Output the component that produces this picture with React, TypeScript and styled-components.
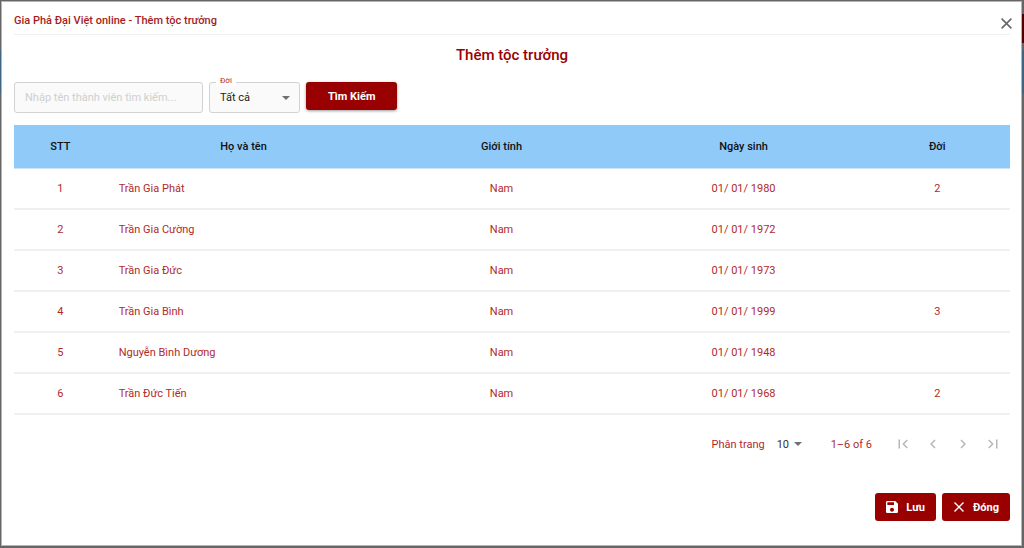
import React from "react";
import styled, { createGlobalStyle } from "styled-components";

const colors = {
  brand: "#990000",
  text: "#b22a2a",
  head: "#90caf9",
  line: "#f0f0f0",
  ink: "#212121",
};

const GlobalStyle = createGlobalStyle`
  *, *::before, *::after { box-sizing: border-box; }
  body { margin: 0; background: #666; }
  body, button, input, select {
    font-family: Roboto, "Noto Sans", sans-serif;
    font-size: 11px;
  }
`;

const Backdrop = styled.div`
  display: flex;
  min-height: 100vh;
  padding: 1px 2px 2px 1px;
  background:
    linear-gradient(#500000, #500000) right 14px / 3px 29px no-repeat,
    linear-gradient(#3f6583, #3f6583) left 50px / 100% 44px no-repeat,
    #666;
`;

const Dialog = styled.section`
  flex: 1;
  display: flex;
  flex-direction: column;
  min-width: 0;
  padding: 0 11px 24px 12px;
  background: #fff;
  border: 1px solid #b4b4b4;
`;

const TitleBar = styled.header`
  display: flex;
  align-items: center;
  justify-content: space-between;
  height: 33px;
  border-bottom: 1px solid #f0f0f0;
`;

const DialogTitle = styled.h1`
  margin: 0;
  padding-top: 6px;
  font-size: 11px;
  font-weight: 500;
  line-height: 16px;
  color: #a51d1d;
`;

const CloseButton = styled.button`
  display: flex;
  margin: 10px -5px 0 0;
  padding: 2px;
  border: 0;
  background: none;
  color: #666;
  cursor: pointer;
`;

const Heading = styled.h2`
  margin: 8px 0 0;
  font-size: 15px;
  font-weight: 500;
  line-height: 24px;
  text-align: center;
  color: ${colors.brand};
`;

const SearchForm = styled.form`
  display: flex;
  align-items: flex-start;
  gap: 6px;
  margin-top: 15px;
`;

const fieldBox = `
  height: 31px;
  border: 1px solid #d2d2d2;
  border-radius: 3px;
  background: #fafafa;
  padding: 0 10px;
  color: ${colors.ink};
`;

const SearchInput = styled.input`
  ${fieldBox}
  width: 189px;
  &::placeholder { color: #cfcfcf; opacity: 1; }
`;

const Field = styled.div`
  position: relative;
  display: flex;
  align-items: center;
`;

const FieldLabel = styled.label`
  position: absolute;
  top: -6px;
  left: 7px;
  padding: 0 4px;
  font-size: 8px;
  line-height: 10px;
  color: ${colors.text};
  background: #fff;
`;

const GenerationSelect = styled.select`
  ${fieldBox}
  width: 91px;
  appearance: none;
`;

const Arrow = styled.svg<{ $right: number }>`
  position: absolute;
  right: ${(p) => p.$right}px;
  pointer-events: none;
  fill: #707070;
`;

const ActionButton = styled.button<{ $wide?: boolean }>`
  display: inline-flex;
  align-items: center;
  justify-content: center;
  gap: 8px;
  height: 28px;
  padding: 0 ${(p) => (p.$wide ? 22 : 11)}px;
  border: 0;
  border-radius: 3px;
  background: ${colors.brand};
  color: #fff;
  font-weight: 700;
  cursor: pointer;
  box-shadow: ${(p) => (p.$wide ? "0 1px 3px rgba(0, 0, 0, 0.4)" : "none")};
`;

const Table = styled.table`
  width: 100%;
  margin-top: 12px;
  table-layout: fixed;
  border-collapse: separate;
  border-spacing: 0;
`;

const Col = styled.col<{ $share: number }>`
  width: ${(p) => p.$share}%;
`;

const HeadCell = styled.th`
  height: 44px;
  padding: 0 12px;
  background: ${colors.head};
  border-bottom: 1px solid #cfe4f6;
  color: #111;
  font-weight: 500;
  text-align: center;
`;

const Cell = styled.td<{ $left?: boolean }>`
  height: 41px;
  padding: 0 12px;
  border-bottom: 2px solid ${colors.line};
  color: ${colors.text};
  text-align: ${(p) => (p.$left ? "left" : "center")};
`;

const Pagination = styled.nav`
  display: flex;
  align-items: center;
  justify-content: flex-end;
  margin-top: 15px;
  padding-right: 8px;
  height: 28px;
  color: ${colors.text};
`;

const PageSize = styled.select`
  width: 25px;
  margin-left: 12px;
  padding: 0;
  border: 0;
  background: none;
  appearance: none;
  color: #333;
`;

const Range = styled.span`
  margin: 0 22px 0 29px;
`;

const PageButtons = styled.div`
  display: flex;
  gap: 12px;
`;

const PageButton = styled.button`
  display: flex;
  padding: 0;
  border: 0;
  background: none;
  color: #b8b8b8;
`;

const Footer = styled.footer`
  display: flex;
  justify-content: flex-end;
  gap: 6px;
  margin-top: 35px;
`;

const DownArrow = ({ right }: { right: number }) => (
  <Arrow $right={right} width="8" height="4" viewBox="0 0 8 4" aria-hidden="true">
    <path d="M0 0h8L4 4z" />
  </Arrow>
);

const Cross = ({ size }: { size: number }) => (
  <svg width={size} height={size} viewBox="0 0 12 12" fill="none" stroke="currentColor" strokeWidth="1.4" aria-hidden="true">
    <path d="M1.500 1.500l9 9M10.500 1.500l-9 9" />
  </svg>
);

const SaveIcon = () => (
  <svg width="12" height="12" viewBox="3 3 18 18" fill="currentColor" aria-hidden="true">
    <path d="M17 3H5c-1.110 0-2 .9-2 2v14c0 1.100.890 2 2 2h14c1.100 0 2-.9 2-2V7l-4-4zm-5 16c-1.660 0-3-1.340-3-3s1.340-3 3-3 3 1.340 3 3-1.340 3-3 3zm3-10H5V5h10v4z" />
  </svg>
);

const pageControls = [
  { label: "Trang đầu", path: "M18.410 16.590L13.820 12l4.590-4.590L17 6l-6 6 6 6zM6 6h2v12H6z" },
  { label: "Trang trước", path: "M15.410 7.410L14 6l-6 6 6 6 1.410-1.410L10.830 12z" },
  { label: "Trang sau", path: "M10 6L8.590 7.410 13.170 12l-4.580 4.590L10 18l6-6z" },
  { label: "Trang cuối", path: "M5.590 7.410L10.180 12l-4.590 4.590L7 18l6-6-6-6zM16 6h2v12h-2z" },
];

const columns = [
  { title: "STT", share: 9.3 },
  { title: "Họ và tên", share: 27.5 },
  { title: "Giới tính", share: 24.3 },
  { title: "Ngày sinh", share: 24.3 },
  { title: "Đời", share: 14.6 },
];

const members = [
  { name: "Trần Gia Phát", born: "01/ 01/ 1980", generation: "2" },
  { name: "Trần Gia Cường", born: "01/ 01/ 1972", generation: "" },
  { name: "Trần Gia Đức", born: "01/ 01/ 1973", generation: "" },
  { name: "Trần Gia Bình", born: "01/ 01/ 1999", generation: "3" },
  { name: "Nguyễn Bình Dương", born: "01/ 01/ 1948", generation: "" },
  { name: "Trần Đức Tiến", born: "01/ 01/ 1968", generation: "2" },
];

export default function App() {
  return (
    <>
      <GlobalStyle />
      <Backdrop>
        <Dialog role="dialog" aria-labelledby="dialog-title">
          <TitleBar>
            <DialogTitle id="dialog-title">Gia Phả Đại Việt online - Thêm tộc trưởng</DialogTitle>
            <CloseButton type="button" aria-label="Đóng cửa sổ">
              <Cross size={13} />
            </CloseButton>
          </TitleBar>
          <Heading>Thêm tộc trưởng</Heading>
          <SearchForm onSubmit={(e) => e.preventDefault()}>
            <SearchInput type="text" aria-label="Tên thành viên" placeholder="Nhập tên thành viên tìm kiếm..." />
            <Field>
              <FieldLabel htmlFor="generation">Đời</FieldLabel>
              <GenerationSelect id="generation" defaultValue="all">
                <option value="all">Tất cả</option>
                <option value="2">2</option>
                <option value="3">3</option>
              </GenerationSelect>
              <DownArrow right={10} />
            </Field>
            <ActionButton type="submit" $wide>
              Tìm Kiếm
            </ActionButton>
          </SearchForm>
          <Table>
            <colgroup>
              {columns.map((c) => (
                <Col key={c.title} $share={c.share} />
              ))}
            </colgroup>
            <thead>
              <tr>
                {columns.map((c) => (
                  <HeadCell key={c.title} scope="col">
                    {c.title}
                  </HeadCell>
                ))}
              </tr>
            </thead>
            <tbody>
              {members.map((m, i) => (
                <tr key={m.name}>
                  <Cell>{i + 1}</Cell>
                  <Cell $left>{m.name}</Cell>
                  <Cell>Nam</Cell>
                  <Cell>{m.born}</Cell>
                  <Cell>{m.generation}</Cell>
                </tr>
              ))}
            </tbody>
          </Table>
          <Pagination aria-label="Phân trang">
            <label htmlFor="page-size">Phân trang</label>
            <Field>
              <PageSize id="page-size" defaultValue="10">
                <option>10</option>
                <option>25</option>
              </PageSize>
              <DownArrow right={0} />
            </Field>
            <Range>1–6 of 6</Range>
            <PageButtons>
              {pageControls.map((c) => (
                <PageButton key={c.label} type="button" aria-label={c.label} disabled>
                  <svg width="18" height="18" viewBox="0 0 24 24" fill="currentColor" aria-hidden="true">
                    <path d={c.path} />
                  </svg>
                </PageButton>
              ))}
            </PageButtons>
          </Pagination>
          <Footer>
            <ActionButton type="button">
              <SaveIcon />
              Lưu
            </ActionButton>
            <ActionButton type="button">
              <Cross size={12} />
              Đóng
            </ActionButton>
          </Footer>
        </Dialog>
      </Backdrop>
    </>
  );
}
